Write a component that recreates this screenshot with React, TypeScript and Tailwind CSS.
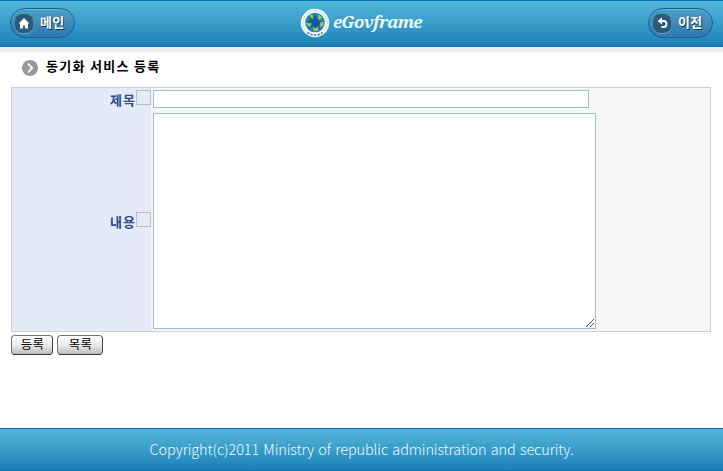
import React from "react";

const KR = "font-['Noto_Sans_CJK_KR',sans-serif]";

function HeaderButton({ label, width, children }: { label: string; width: string; children: React.ReactNode }) {
  return (
    <button
      className={`${width} flex h-[30px] items-center rounded-full border border-[#155f8a] bg-gradient-to-b from-[#4c9fc6] to-[#3178ad] pl-[4px] shadow-[inset_0_1px_0_#69b3d3]`}
    >
      <span className="flex h-[19px] w-[18px] items-center justify-center rounded-[7px] bg-[#2a5b78] shadow-[0_1px_0_#62a5cb]">
        {children}
      </span>
      <span className="ml-[7px] -mt-[2px] whitespace-nowrap text-[13px] leading-[18px] font-bold tracking-[0.4px] text-white [text-shadow:1px_1px_0_#12384f]">
        {label}
      </span>
    </button>
  );
}

function Emblem() {
  return (
    <svg width="30" height="30" viewBox="0 0 30 30">
      <circle cx="15" cy="15" r="14.2" fill="#f4fafc" />
      <circle cx="15" cy="15" r="12.1" fill="none" stroke="#a9cbe0" strokeWidth="1" strokeDasharray="1.2 0.8" />
      <path d="M7.5 24.5A12.1 12.1 0 0 0 22.5 24.5" fill="none" stroke="#3b7fae" strokeWidth="1.6" strokeDasharray="2 1.6" />
      <circle cx="15" cy="14.5" r="9.8" fill="#2b7dbd" />
      <path d="M15 6l2 5 4-3-1.500 5 4.500 1.500-4.500 2 1 5-4-2.500-2 4-1.500-4.500-4 2.500 1-4.500-4.500-2 4.500-2-1-5 4 3z" fill="#15569b" />
      <g fill="#8ccb4d">
        <path d="M9 7.500l3.500-1 1 4.500-2-0.500z" />
        <path d="M18.500 6.500l4 3-3.500 3-1-2.500z" />
        <path d="M5.500 14l3.500 1 3 0.500-2 3.500-2.500-1.500z" />
        <path d="M20.500 14l3.500 0-1 4-3.500 1z" />
        <path d="M13 18.500l2.500 2 3-2.500-0.500 4.500-4 1z" />
      </g>
    </svg>
  );
}

function Row({ label, last, children }: { label: string; last?: boolean; children: React.ReactNode }) {
  return (
    <div className={last ? "flex h-[221px]" : "flex h-[22px]"}>
      <div className="flex w-[139px] items-center justify-end bg-[#e4eaf8]">
        <span className="mt-[2px] text-[13px] leading-4 font-bold tracking-[1px] text-[#2c4a87]">{label}</span>
        <span className="-mt-[3px] h-[15px] w-[15px] border border-[#bebebe]" />
      </div>
      <div className="pl-[2px]">{children}</div>
    </div>
  );
}

function ActionButton({ label, width }: { label: string; width: string }) {
  return (
    <button
      className={`${width} flex h-[20px] items-start justify-center rounded-[4px] border border-[#777] border-r-[#444] border-b-[#333] bg-gradient-to-b from-white via-[#ececec] to-[#bdbdbd] text-[12.5px] text-black`}
    >
      <span className="-mt-px ml-px leading-[18px] tracking-[0.3px]">{label}</span>
    </button>
  );
}

export default function App() {
  return (
    <div className={`${KR} flex h-[471px] w-[723px] flex-col overflow-hidden bg-white`}>
      <header className="flex h-[47px] items-start justify-between border-y border-[#0876ae] bg-gradient-to-b from-[#53b8d9] to-[#1b80b8] pt-[7px] pr-[10px] pl-[10px]">
        <HeaderButton label="메인" width="w-[65px]">
          <svg width="12" height="11" viewBox="0 0 12 11" fill="#fff">
            <path d="M6 0L0.5 5.5H2V10.5H5V7.5H7V10.5H10V5.5H11.5Z" />
          </svg>
        </HeaderButton>
        <div className="flex items-center">
          <Emblem />
          <span className="ml-[3px] -mt-[3px] h-[26px] w-[90px]">
            <span className="block whitespace-nowrap font-['Noto_Serif','DejaVu_Serif','Liberation_Serif',serif] text-[17px] leading-[26px] font-bold tracking-[-0.8px] text-[#eef9fd] italic">
              eGovframe
            </span>
          </span>
        </div>
        <HeaderButton label="이전" width="w-[65px]">
          <svg width="11" height="12" viewBox="0 0 11 12">
            <path d="M0.5 4L5 0.5V7.5Z" fill="#fff" />
            <path d="M4 4H6.5A2.9 2.9 0 0 1 6.5 10H4.5" fill="none" stroke="#fff" strokeWidth="1.8" />
          </svg>
        </HeaderButton>
      </header>
      <div className="h-[5px] bg-[#eee]" />
      <main className="flex h-[376px] flex-col px-[11px]">
        <div className="flex h-[35px] pl-[11px]">
          <svg className="mt-[8px]" width="16" height="16" viewBox="0 0 16 16">
            <circle cx="8" cy="8" r="8" fill="#999" />
            <path d="M6 3.5L10 8L6 12.5" fill="none" stroke="#fff" strokeWidth="2" strokeDasharray="2.4 0.4" />
          </svg>
          <h1 className="mt-[5px] ml-[8px] whitespace-nowrap text-[13px] leading-[18px] font-bold tracking-[1.3px] text-black">동기화 서비스 등록</h1>
        </div>
        <div className="h-[245px] w-[700px] border border-[#d0d0d0] bg-[#f6f6f6]">
          <Row label="제목">
            <div className="mt-[2px] h-[18px] w-[436px] border border-[#9dbdd0] bg-white" />
          </Row>
          <Row label="내용" last>
            <div className="mt-[3px] flex h-[216px] w-[443px] items-end justify-end border border-[#9dbdd0] bg-white">
              <svg width="9" height="9" viewBox="0 0 9 9" stroke="#555" strokeWidth="1">
                <path d="M0 8L8 0M4 8L8 4" />
              </svg>
            </div>
          </Row>
        </div>
        <div className="flex gap-[4px] pt-[3px]">
          <ActionButton label="등록" width="w-[42px]" />
          <ActionButton label="목록" width="w-[46px]" />
        </div>
      </main>
      <footer className="flex h-[43px] justify-center border-y border-[#0876ae] bg-gradient-to-b from-[#53b8d9] to-[#1b80b8]">
        <p className="mt-[10px] whitespace-nowrap text-[14.5px] leading-[20px] font-light tracking-[-0.12px] text-[#effaff] [word-spacing:1.2px]">
          Copyright(c)2011 Ministry of republic administration and security.
        </p>
      </footer>
    </div>
  );
}
